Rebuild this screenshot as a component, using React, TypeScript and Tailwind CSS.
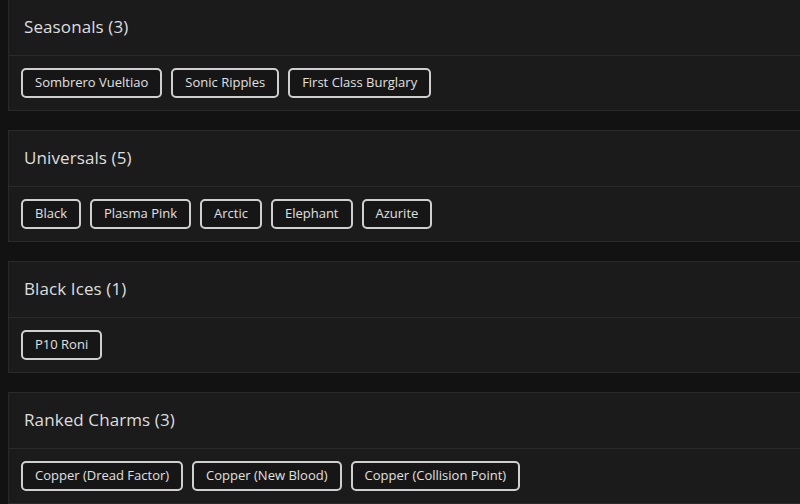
import React from "react";

const groups = [
  { title: "Seasonals", items: ["Sombrero Vueltiao", "Sonic Ripples", "First Class Burglary"] },
  { title: "Universals", items: ["Black", "Plasma Pink", "Arctic", "Elephant", "Azurite"] },
  { title: "Black Ices", items: ["P10 Roni"] },
  { title: "Ranked Charms", items: ["Copper (Dread Factor)", "Copper (New Blood)", "Copper (Collision Point)"] },
];

export default function App() {
  return (
    <div className="w-[800px] h-[504px] overflow-hidden bg-[#121212]">
      <div
        className="-mt-px pl-2 flex flex-col gap-[19px]"
        style={{ fontFamily: '"Open Sans", "Liberation Sans", sans-serif' }}
      >
        {groups.map((g) => (
          <div key={g.title} className="w-[810px] shrink-0 bg-[#1b1b1b] border border-[#2a2a2a]">
            {/* Header */}
            <div className="h-[56px] flex items-center px-[15px] pb-[2px] border-b border-[#2a2a2a]">
              <h3 className="text-[17px] font-medium text-[#dedede] tracking-[0.1px]">
                {g.title} ({g.items.length})
              </h3>
            </div>
            {/* Chips */}
            <div className="h-[54px] flex items-center gap-[9px] px-3">
              {g.items.map((item) => (
                <span
                  key={item}
                  className="h-[30px] flex items-center px-[12px] rounded-[5px] border-2 border-[#cfcfcf] bg-[#161616] text-[13px] text-[#e0e0e0]"
                >
                  {item}
                </span>
              ))}
            </div>
          </div>
        ))}
      </div>
    </div>
  );
}
